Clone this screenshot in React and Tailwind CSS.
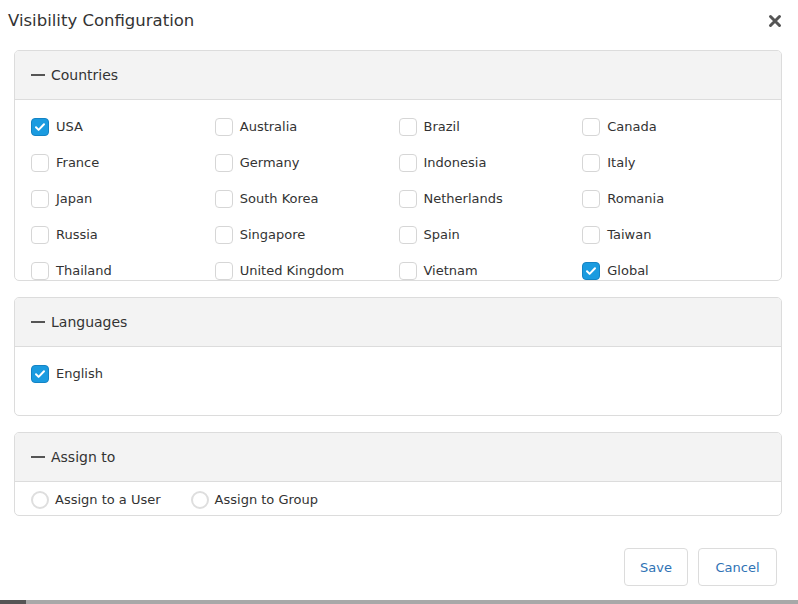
import React, { useState } from 'react';

const countries = [
  'USA', 'Australia', 'Brazil', 'Canada',
  'France', 'Germany', 'Indonesia', 'Italy',
  'Japan', 'South Korea', 'Netherlands', 'Romania',
  'Russia', 'Singapore', 'Spain', 'Taiwan',
  'Thailand', 'United Kingdom', 'Vietnam', 'Global',
];

// Checkbox square, blue when checked
const Check = ({ checked }) => (
  <span
    className={`w-[18px] h-[18px] rounded-[4px] border flex items-center justify-center shrink-0 ${
      checked ? 'bg-[#1a9be0] border-[#1483c4]' : 'bg-white border-[#d6d6d6]'
    }`}
  >
    {checked && (
      <svg width="12" height="12" viewBox="0 0 12 12" fill="none">
        <path d="M2 6.3l2.6 2.6L10 3.2" stroke="#fff" strokeWidth="2" strokeLinecap="round" strokeLinejoin="round" />
      </svg>
    )}
  </span>
);

const Section = ({ title, children }) => (
  <div className="ml-[14px] mr-[16px] border border-[#dcdcdc] rounded-[5px] overflow-hidden">
    <div className="h-[49px] bg-[#f3f3f3] border-b border-[#dcdcdc] flex items-center pl-4 text-[14px] text-[#333]">
      <span className="w-[14px] h-[2px] bg-[#555] mr-[6px]" />
      {title}
    </div>
    {children}
  </div>
);

const App = () => {
  const [selected, setSelected] = useState(['USA', 'Global']);
  const [english, setEnglish] = useState(true);
  const [assign, setAssign] = useState(null);

  const toggle = (c) => {
    setSelected(selected.includes(c) ? selected.filter((s) => s !== c) : [...selected, c]);
  };

  return (
    <div className="w-[798px] h-[604px] flex flex-col bg-[#9a9a9a]" style={{ fontFamily: '"DejaVu Sans", sans-serif' }}>
      <div className="h-[600px] bg-white flex flex-col shrink-0">
        {/* Title bar */}
        <div className="h-[50px] flex items-start justify-between pl-2 pr-4 pt-[9px]">
          <h1 className="text-[16.5px] text-[#333]">Visibility Configuration</h1>
          <button className="mt-[5px] text-[#555]">
            <svg width="14" height="14" viewBox="0 0 14 14">
              <path d="M2.5 2.5l9 9M11.5 2.5l-9 9" stroke="currentColor" strokeWidth="3" strokeLinecap="round" />
            </svg>
          </button>
        </div>

        {/* Countries */}
        <Section title="Countries">
          <div className="h-[180px] overflow-hidden pl-4 pr-[15px] pt-[9px] grid grid-cols-4 auto-rows-[36px]">
            {countries.map((c) => (
              <label key={c} className="flex items-center gap-[7px] text-[13px] text-[#333] cursor-pointer" onClick={() => toggle(c)}>
                <Check checked={selected.includes(c)} />
                {c}
              </label>
            ))}
          </div>
        </Section>

        <div className="h-4" />

        {/* Languages */}
        <Section title="Languages">
          <div className="h-[68px] pl-4 pt-[17px]">
            <label className="flex items-center gap-[7px] text-[13px] text-[#333] cursor-pointer" onClick={() => setEnglish(!english)}>
              <Check checked={english} />
              English
            </label>
          </div>
        </Section>

        <div className="h-[16px]" />

        {/* Assign to */}
        <Section title="Assign to">
          <div className="h-[33px] pl-4 pt-[2px] flex items-center gap-[30px] text-[13px] text-[#333]">
            {['Assign to a User', 'Assign to Group'].map((a) => (
              <label key={a} className="flex items-center gap-[6px] cursor-pointer" onClick={() => setAssign(a)}>
                <span className="w-[18px] h-[18px] rounded-full border-2 border-[#dedede] flex items-center justify-center">
                  {assign === a && <span className="w-2 h-2 rounded-full bg-[#1a9be0]" />}
                </span>
                {a}
              </label>
            ))}
          </div>
        </Section>

        {/* Footer buttons */}
        <div className="flex justify-end gap-[10px] pr-[21px] mt-[32px]">
          <button className="h-[38px] w-[64px] pt-[1px] border border-[#dcdcdc] rounded-[4px] text-[13px] text-[#2f73b5]">Save</button>
          <button className="h-[38px] w-[79px] pt-[1px] border border-[#dcdcdc] rounded-[4px] text-[13px] text-[#2f73b5]">Cancel</button>
        </div>
      </div>
      <div className="flex-1 flex">
        <div className="w-[26px] bg-[#555]" />
        <div className="flex-1 bg-[#a8a8a8]" />
      </div>
    </div>
  );
};

export default App;
